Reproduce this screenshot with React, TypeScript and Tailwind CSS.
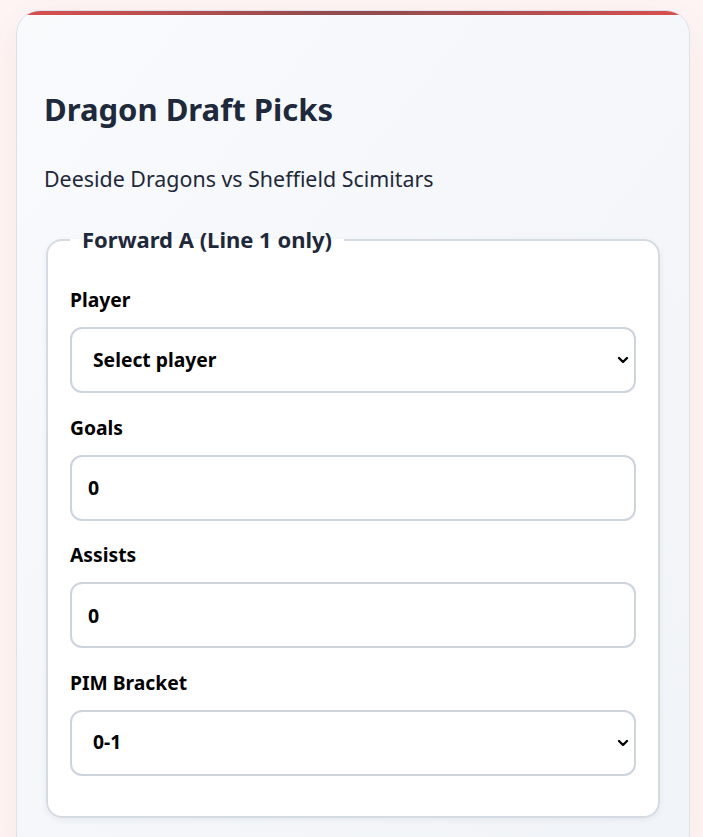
import { ChevronDown } from "lucide-react";

const font = { fontFamily: '"Noto Sans", "Open Sans", sans-serif' };

const Field = ({ label, children }: { label: string; children: React.ReactNode }) => (
  <div className="flex flex-col">
    <label className="text-[19.3px] leading-[26px] font-bold text-black mb-[14px]">{label}</label>
    {children}
  </div>
);

const Select = ({ value, options }: { value: string; options: string[] }) => (
  <div className="relative">
    <select
      defaultValue={value}
      className="appearance-none w-full h-[66px] rounded-xl border-2 border-[#cdd4de] bg-white pl-[21px] pr-10 text-[19.3px] font-bold text-black outline-none"
    >
      {options.map((o) => (
        <option key={o}>{o}</option>
      ))}
    </select>
    <ChevronDown
      className="absolute right-[5px] top-1/2 -translate-y-1/2 w-[16px] h-[16px] text-black pointer-events-none"
      strokeWidth={3.5}
    />
  </div>
);

const NumberInput = () => (
  <input
    type="text"
    defaultValue="0"
    className="w-full h-[66px] rounded-xl border-2 border-[#cdd4de] bg-white px-[16px] text-[19.5px] font-bold text-black outline-none"
  />
);

export default function App() {
  return (
    <div className="min-h-screen bg-[#fdf5f4] px-4 pt-[10px]" style={font}>
      <div className="w-[674px] rounded-[24px] border border-[#dde2ea] bg-gradient-to-br from-[#f8fafc] to-[#f1f4f8] shadow-[0_10px_40px_rgba(220,80,80,0.08)] overflow-hidden">
        <div className="h-1 bg-gradient-to-r from-[#d94f4f] via-[#8e4a4d] to-[#d94f4f]" />
        <div className="px-[27px] pt-[76px] pb-10">
          <h1 className="text-[31px] leading-[36px] font-bold text-[#1e293b]">Dragon Draft Picks</h1>
          <p className="mt-[38px] text-[21.4px] leading-[28px] text-[#1e293b]">Deeside Dragons vs Sheffield Scimitars</p>

          <fieldset className="mt-[33px] mx-[2px] rounded-2xl border-2 border-[#d5dbe3] bg-white px-[22px] pt-[34px] pb-[40px] shadow-[0_2px_6px_rgba(15,23,42,0.06)]">
            <legend className="px-3 text-[22px] leading-[27px] font-bold text-[#1e293b]">Forward A (Line 1 only)</legend>
            <div className="flex flex-col gap-[21.5px]">
              <Field label="Player">
                <Select value="Select player" options={["Select player"]} />
              </Field>
              <Field label="Goals">
                <NumberInput />
              </Field>
              <Field label="Assists">
                <NumberInput />
              </Field>
              <Field label="PIM Bracket">
                <Select value="0-1" options={["0-1", "2-4", "5+"]} />
              </Field>
            </div>
          </fieldset>
        </div>
      </div>
    </div>
  );
}
